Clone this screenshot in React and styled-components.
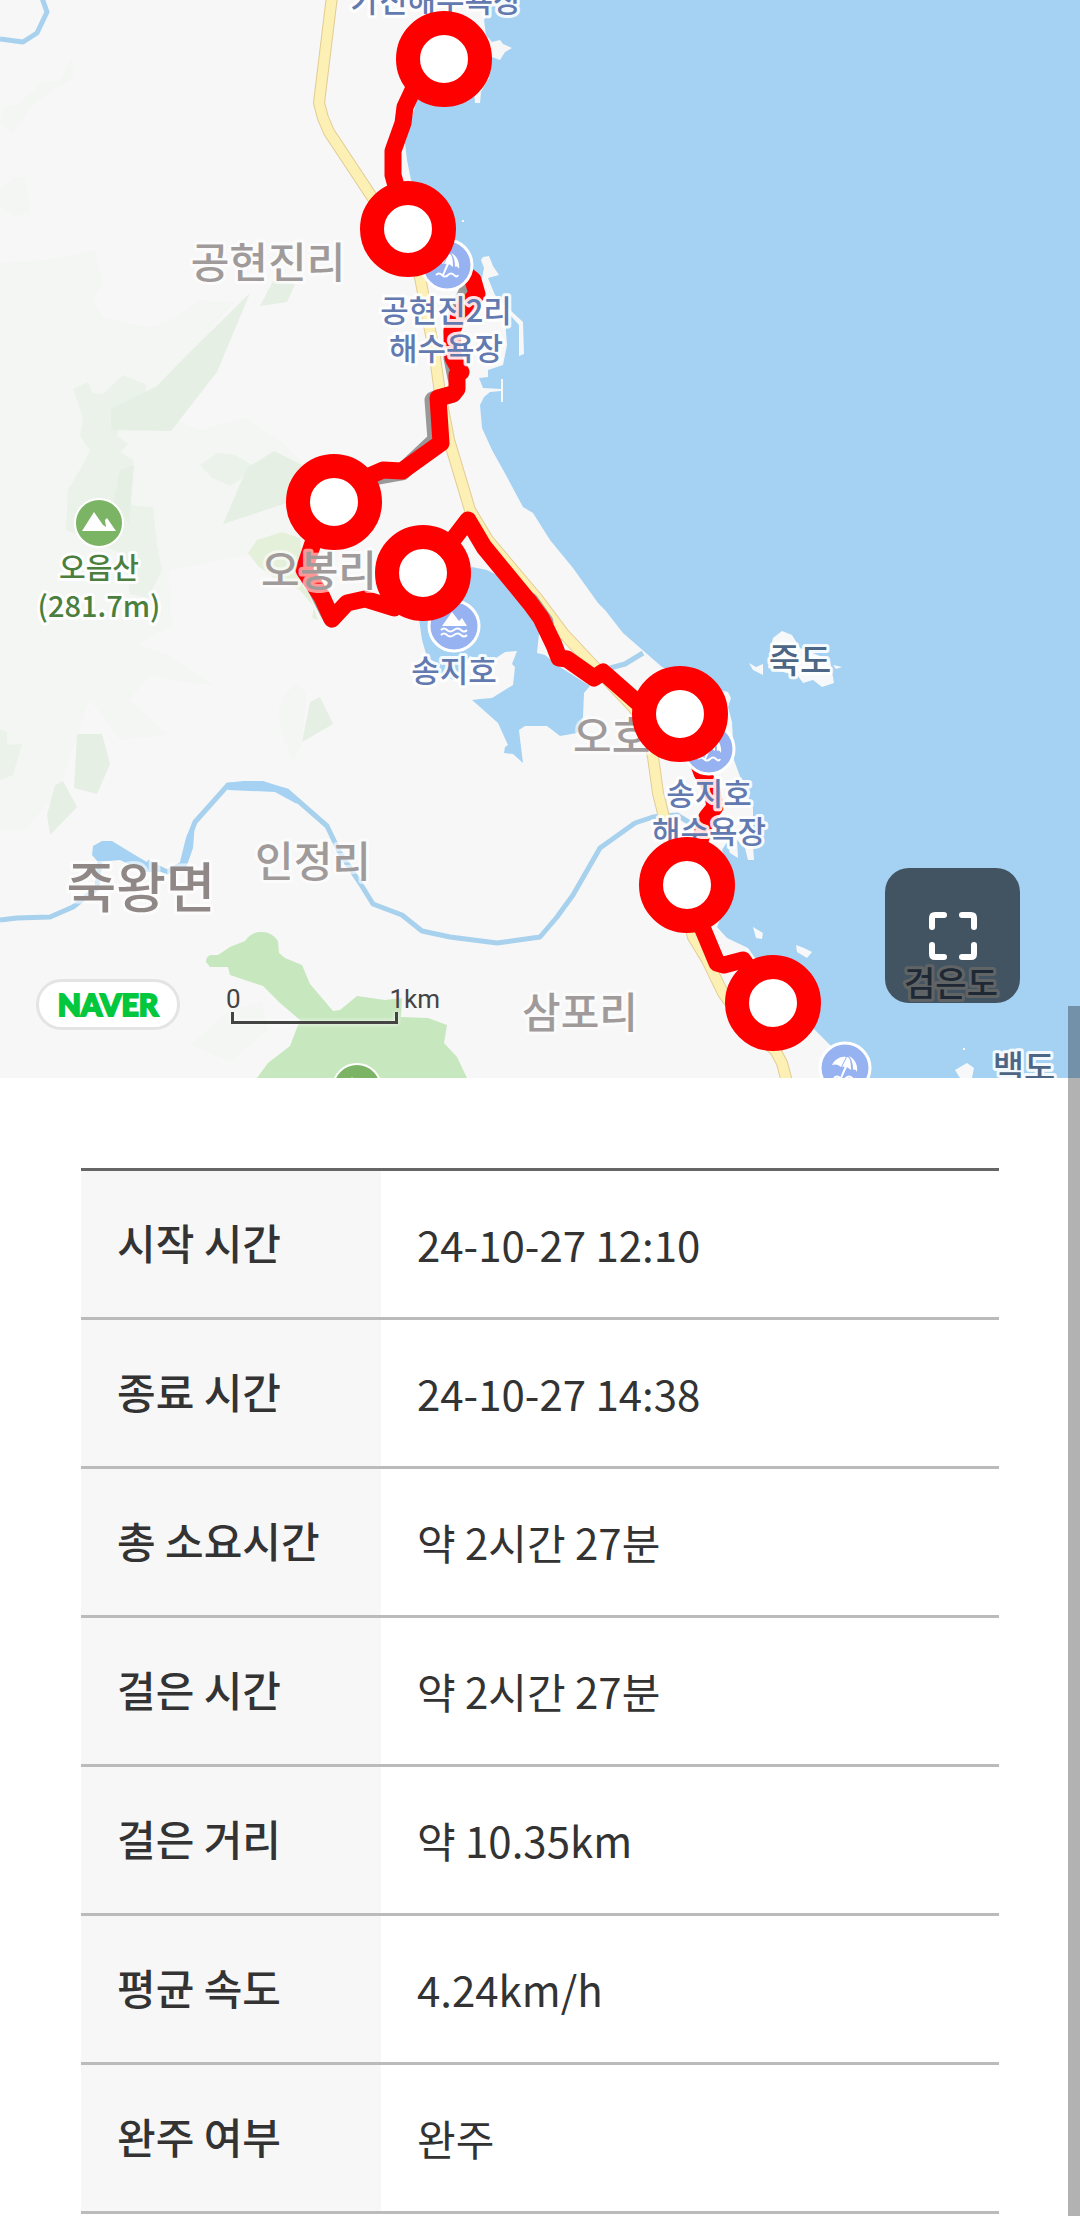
import styled, { createGlobalStyle } from 'styled-components';

const GlobalStyle = createGlobalStyle`
  body {
    margin: 0;
    background: #fff;
    color: #333;
    font-family: 'Noto Sans CJK KR', sans-serif;
  }
`;

const MapSection = styled.section`
  position: relative;
  overflow: hidden;
`;

const MapCanvas = styled.svg`
  display: block;
  width: 100%;
  aspect-ratio: 1080 / 1078;
  background: #f7f7f7;
`;

const labelColors = {
  village: '#a09b9a',
  town: '#8f8887',
  beach: '#627ab0',
  island: '#4d6685',
  peak: '#4b7f3d',
};

const labelSizes = {
  village: 42,
  town: 54,
  beach: 31,
  island: 34,
  peak: 29,
};

const Label = styled.text`
  font-family: 'Noto Sans CJK KR', sans-serif;
  font-size: ${({ $kind }) => labelSizes[$kind]}px;
  font-weight: 500;
  fill: ${({ $kind }) => labelColors[$kind]};
  stroke: ${({ $kind }) => ($kind === 'village' || $kind === 'town' ? 'rgba(255, 255, 255, 0.6)' : 'rgba(255, 255, 255, 0.9)')};
  stroke-width: 6px;
  stroke-linejoin: round;
  paint-order: stroke;
  text-anchor: middle;
`;

const MapControls = styled.div`
  position: absolute;
  left: 36px;
  bottom: 48px;
  display: flex;
  align-items: flex-end;
  gap: 40px;
`;

const NaverLink = styled.a`
  display: flex;
  align-items: center;
  justify-content: center;
  box-sizing: border-box;
  width: 144px;
  height: 51px;
  border: 3px solid #e4e4e4;
  border-radius: 26px;
  background: #fff;
  color: #03c73c;
  font: 900 30px/45px Lato, sans-serif;
  -webkit-text-stroke: 2px #03c73c;
  text-decoration: none;
`;

const Scale = styled.div`
  width: 220px;
  margin-bottom: 6px;
  color: #444;
  font: 26px/26px Roboto, sans-serif;
`;

const ScaleNumbers = styled.div`
  display: flex;
  justify-content: space-between;
  padding-left: 6px;
`;

const ScaleBar = styled.div`
  box-sizing: border-box;
  width: 167px;
  height: 12px;
  margin-left: 11px;
  border: 3px solid #444;
  border-top: 0;
  filter: drop-shadow(0 0 2px #fff);
`;

const FullscreenButton = styled.button`
  position: absolute;
  right: 60px;
  bottom: 75px;
  display: flex;
  align-items: center;
  justify-content: center;
  width: 135px;
  height: 135px;
  padding: 0;
  border: 0;
  border-radius: 24px;
  background: rgba(0, 0, 0, 0.6);
`;

const Summary = styled.section`
  padding: 90px 81px 2px;
`;

const SummaryTable = styled.table`
  width: 100%;
  border-spacing: 0;
  border-top: 3px solid #666;
  font-size: 42px;
  line-height: 62px;
  text-align: left;
`;

const HeadCell = styled.th`
  width: 228px;
  padding: 40px 36px 44px;
  border-bottom: 3px solid #bbb;
  background: #f7f7f7;
  font-weight: 500;
`;

const DataCell = styled.td`
  padding: 42px 36px;
  border-bottom: 3px solid #bbb;
`;

const ScrollThumb = styled.div`
  position: fixed;
  top: 1006px;
  right: 0;
  bottom: 0;
  width: 12px;
  background: rgba(0, 0, 0, 0.3);
`;

const records = [
  { name: '시작 시간', value: '24-10-27 12:10' },
  { name: '종료 시간', value: '24-10-27 14:38' },
  { name: '총 소요시간', value: '약 2시간 27분' },
  { name: '걸은 시간', value: '약 2시간 27분' },
  { name: '걸은 거리', value: '약 10.35km' },
  { name: '평균 속도', value: '4.24km/h' },
  { name: '완주 여부', value: '완주' },
];

const labels = [
  { kind: 'beach', x: 436, y: 12, text: '가진해수욕장' },
  { kind: 'village', x: 268, y: 278, text: '공현진리' },
  { kind: 'beach', x: 446, y: 322, text: '공현진2리' },
  { kind: 'beach', x: 446, y: 360, text: '해수욕장' },
  { kind: 'village', x: 319, y: 586, text: '오봉리' },
  { kind: 'peak', x: 99, y: 579, text: '오음산' },
  { kind: 'peak', x: 99, y: 617, text: '(281.7m)' },
  { kind: 'beach', x: 454, y: 682, text: '송지호' },
  { kind: 'village', x: 631, y: 752, text: '오호리' },
  { kind: 'island', x: 800, y: 673, text: '죽도' },
  { kind: 'beach', x: 709, y: 805, text: '송지호' },
  { kind: 'beach', x: 709, y: 843, text: '해수욕장' },
  { kind: 'village', x: 313, y: 877, text: '인정리' },
  { kind: 'town', x: 141, y: 908, text: '죽왕면' },
  { kind: 'village', x: 580, y: 1028, text: '삼포리' },
  { kind: 'island', x: 951, y: 996, text: '검은도' },
  { kind: 'island', x: 1024, y: 1080, text: '백도' },
];

const checkpoints = [
  [444, 59],
  [408, 229],
  [334, 502],
  [423, 573],
  [680, 714],
  [687, 885],
  [773, 1003],
];

const seaPath = `M486 0L490 10 484 20 486 35 492 42 500 40 503 44 512 48 505 52 500 60 492 57
  489 78 481 92 480 103 475 103 474 90 440 95 417 100 412 117 405 143 407 160 411 180 440 220
  462 260 473 276 482 278 484 268 481 260 483 257 489 256 493 266 499 275 488 278 495 295
  509 309 523 322 524 354 519 356 519 325 510 315 505 318 507 345 503 365 488 370 488 377
  479 378 483 388 501 389 501 379 503 379 503 402 501 402 501 391 490 392 484 397 480 405
  482 428 492 450 507 477 523 507 533 513 550 540 573 568 598 603 605 610 623 633 662 667
  700 685 728 692 731 698 728 707 732 722 734 760 745 790 753 808 753 845 754 860 748 860
  745 848 737 840 738 858 730 853 727 842 722 850 734 885 717 927 727 938 748 948 755 958
  790 1000 815 1030 833 1048 862 1078H1080V0Z`;

const lakePath = `M472 567L487 570 497 575 520 600 540 624 537 653 545 655 560 667 590 686 584 693
  583 717 577 733 560 736 547 726 525 726 519 730 521 747 523 763 513 754 504 753 505 747
  508 745 498 723 480 707 472 700 480 699 492 698 513 685 515 667 512 664 517 651 505 652
  487 664 470 656 453 680 440 673 430 667 422 640 418 612Z`;

const roadPath = `M332 -4L319 103 323 118 329 132 372 197 410 250 420 277 428 320 434 350 440 393
  449 440 470 510 488 540 537 598 564 634 592 664 633 707 647 730 653 757 658 793 663 813
  678 880 693 937 707 960 723 993 750 1030 775 1050 782 1063 787 1082`;

const routePath = `M444 59L412 92 405 107 403 123 393 151 393 175 408 229 473 280 477 294
  461 312 452 330 453 358 461 372 457 375 457 389 453 394 438 398 441 443 402 471 383 470
  367 477 334 502 314 540 304 570 322 597 332 619 347 603 365 599 394 608 423 573 455 537
  468 520 484 547 530 603 541 618 554 645 559 658 567 659 594 678 603 672 637 702 680 714
  702 773 712 790 715 807 707 817 687 885 702 927 717 963 724 965 743 960 773 1003`;

const Umbrella = () => (
  <g fill="#fff" stroke="none">
    <path d="M-13 -3C-10 -9 -4 -12 1 -11L-4 -1C-7 -4 -10 -4 -13 -3Z" />
    <path d="M2 -11C5 -11 6 -6 6 2C3 -1 0 -2 -3 -1Z" />
    <path d="M4 -12C10 -9 13 -3 12 4C11 2 10 1 8 2C8 -4 7 -8 4 -12Z" />
    <path d="M0 -2L2 -1 -3 10 -5 10Z" />
    <path
      d="M-11 10Q-8 7 -5 10T1 10T7 10T11 10"
      fill="none"
      stroke="#fff"
      strokeWidth="2"
    />
  </g>
);

const LakeSign = () => (
  <g fill="none" stroke="#fff" strokeWidth="2">
    <path d="M-12 0L-2 -14 5 -5 8 -8 13 0Z" fill="#fff" stroke="none" />
    <path d="M-13 4Q-10 1 -7 4T0 4T7 4T13 4M-13 9Q-10 6 -7 9T0 9T7 9T13 9" />
  </g>
);

const PeakSign = () => (
  <path d="M-17 8L-5 -11 4 2 7 4 6 -3 8 -5 17 8Z" fill="#fff" stroke="none" />
);

const Terrain = () => (
  <>
    <g fill="#f4f6f4">
      <path d="M0 262L45 260 95 250 103 282 94 300 103 318 150 327 175 318 200 300 235 302 190 355 175 420 200 430 245 418 280 440 310 470 310 540 250 555 170 570 172 625 138 645 170 655 213 685 180 682 150 674 130 700 168 735 120 740 105 720 90 700 60 790 25 830 0 830Z" />
      <path d="M5 106L18 105 43 82 60 80 72 58 75 78 55 88 30 108 12 134 0 122Z" />
      <path d="M0 190L12 178 26 177 30 212 15 217 0 205Z" />
      <path d="M278 712L285 694 297 684 307 692 302 742 293 762 283 736Z" />
      <path d="M190 1045L230 1010 262 1002 268 1030 230 1062Z" />
    </g>
    <g fill="#ebf2ea">
      <path d="M73 389L88 382 92 393 103 394 123 375 147 385 142 405 123 417 117 436 128 444 120 452 133 460 131 505 153 507 157 545 162 570 148 598 130 594 125 555 66 530 68 490 80 470 90 450 80 436 83 418Z" />
      <path d="M200 465L218 453 235 455 252 465 242 478 230 486 212 478Z" />
      <path d="M0 730L7 732 7 745 22 744 13 775 0 780Z" />
    </g>
    <g fill="#e5efe4">
      <path d="M250 293L217 372 171 431 111 430V409L157 386 187 355Z" />
      <path d="M273 281L295 284 287 302 260 306Z" />
      <path d="M274 451L302 465 310 500 287 503 223 524 247 468Z" />
      <path d="M120 470L134 465 129 523 113 503Z" />
      <path d="M77 734H102L110 764 97 794 74 788Z" />
      <path d="M63 781L77 807 50 835 47 815 55 785Z" />
      <path d="M320 697L333 724 302 742 310 702Z" />
    </g>
    <path
      d="M248 553L257 540 282 532 300 538 304 580 318 620 312 618 314 607 300 590 273 577 258 566Z"
      fill="#e5f0da"
    />
    <path
      d="M206 962Q206 956 211 955L218 955 230 947 245 941Q252 931 262 932 272 932 278 941L279 953 285 958 302 965 310 984 333 1011 340 1010 357 996 385 1000 402 998 401 1017 428 1018 447 1025 444 1043 457 1057 467 1078H257L268 1063 290 1046 300 1020 280 1003 263 986 230 975 228 967H210Z"
      fill="#c7e7be"
    />
  </>
);

const Water = () => (
  <>
    <g fill="none" stroke="#a8d1ee" strokeWidth="5" strokeLinejoin="round">
      <path d="M42 -2L47 12 37 33 23 42 0 39" />
      <path d="M0 920L17 918 50 917 73 907 97 888 100 860" />
      <path d="M147 862L167 872 182 864 188 840 195 822 228 785 263 785 287 791 327 826 340 853 360 883 373 904 402 915 422 931 450 937 497 943 540 937 557 917 573 895 600 848 635 823 653 817 677 815 690 823" />
      <path d="M610 668L625 664 643 653" />
    </g>
    <g fill="#a5d2f3">
      <path d="M92 855L93 846 102 841H112L130 852 150 864 167 872 145 872 120 860 98 862Z" />
      <path d="M180 868L187 835 195 822 193 848 186 868Z" />
      <path d="M226 783L243 781H263L285 788 294 796 297 804 275 792 228 790Z" />
      <path d={seaPath} />
      <path d={lakePath} />
    </g>
    <g fill="#f6f8f9">
      <path d="M770 650L773 638 782 631 792 635 800 648 830 660 834 683 822 687 813 680 803 683 798 676 768 668Z" />
      <path d="M749 663L756 667 763 664 763 675 753 670Z" />
      <path d="M833 665L842 667 836 669Z" />
      <path d="M753 927L763 933 762 939 756 938Z" />
      <path d="M796 945L804 948 812 952 807 958 797 952Z" />
      <path d="M955 1070L967 1063 974 1068 972 1078H960Z" />
      <path d="M963 1048h2v2h-2zM462 220h2v2h-2z" />
    </g>
  </>
);

const CourseMap = () => (
  <MapCanvas viewBox="0 0 1080 1078" preserveAspectRatio="xMidYMid slice">
    <Terrain />
    <Water />
    <g fill="none" strokeLinejoin="round" strokeLinecap="round">
      <path d={roadPath} stroke="#e2cb94" strokeWidth="12" />
      <path d={roadPath} stroke="#fdf0b4" strokeWidth="10" />
      <path
        d="M470 286L458 310 452 332 452 358 456 378M453 394L433 400 436 440 402 472 368 478M312 580L327 610 332 619M530 601L545 622"
        stroke="#999"
        strokeWidth="17"
      />
      <path d={routePath} stroke="#f00" strokeWidth="17" />
    </g>
    <g fill="#97b2f1" stroke="#fff" strokeWidth="3">
      <g transform="translate(447 265)">
        <circle r="25" />
        <Umbrella />
      </g>
      <g transform="translate(709 749)">
        <circle r="25" />
        <Umbrella />
      </g>
      <g transform="translate(845 1068)">
        <circle r="25" />
        <Umbrella />
      </g>
      <g transform="translate(454 626)">
        <circle r="25" />
        <LakeSign />
      </g>
    </g>
    <g fill="#7bb464" stroke="#fff" strokeWidth="2">
      <g transform="translate(99 523)">
        <circle r="24" />
        <PeakSign />
      </g>
      <g transform="translate(357 1088)">
        <circle r="24" />
        <PeakSign />
      </g>
    </g>
    {labels.map(({
      kind, x, y, text,
    }) => (
      <Label key={`${x}-${y}`} $kind={kind} x={x} y={y}>{text}</Label>
    ))}
    <g fill="#fff" stroke="#f00" strokeWidth="24">
      {checkpoints.map(([x, y]) => (
        <circle key={`${x}-${y}`} cx={x} cy={y} r="36" />
      ))}
    </g>
  </MapCanvas>
);

const FullscreenIcon = () => (
  <svg
    width="48"
    height="48"
    viewBox="0 0 48 48"
    fill="none"
    stroke="#fff"
    strokeWidth="6"
    strokeLinecap="round"
    strokeLinejoin="round"
  >
    <path d="M3 15V6Q3 3 6 3H15M33 3H42Q45 3 45 6V15M45 33V42Q45 45 42 45H33M15 45H6Q3 45 3 42V33" />
  </svg>
);

const App = () => (
  <>
    <GlobalStyle />
    <main>
      <MapSection>
        <CourseMap />
        <MapControls>
          <NaverLink href="#naver">NAVER</NaverLink>
          <Scale>
            <ScaleNumbers>
              <span>0</span>
              <span>1km</span>
            </ScaleNumbers>
            <ScaleBar />
          </Scale>
        </MapControls>
        <FullscreenButton type="button" aria-label="전체 화면">
          <FullscreenIcon />
        </FullscreenButton>
      </MapSection>
      <Summary>
        <SummaryTable>
          <tbody>
            {records.map(({ name, value }) => (
              <tr key={name}>
                <HeadCell scope="row">{name}</HeadCell>
                <DataCell>{value}</DataCell>
              </tr>
            ))}
          </tbody>
        </SummaryTable>
      </Summary>
    </main>
    <ScrollThumb />
  </>
);

export default App;
